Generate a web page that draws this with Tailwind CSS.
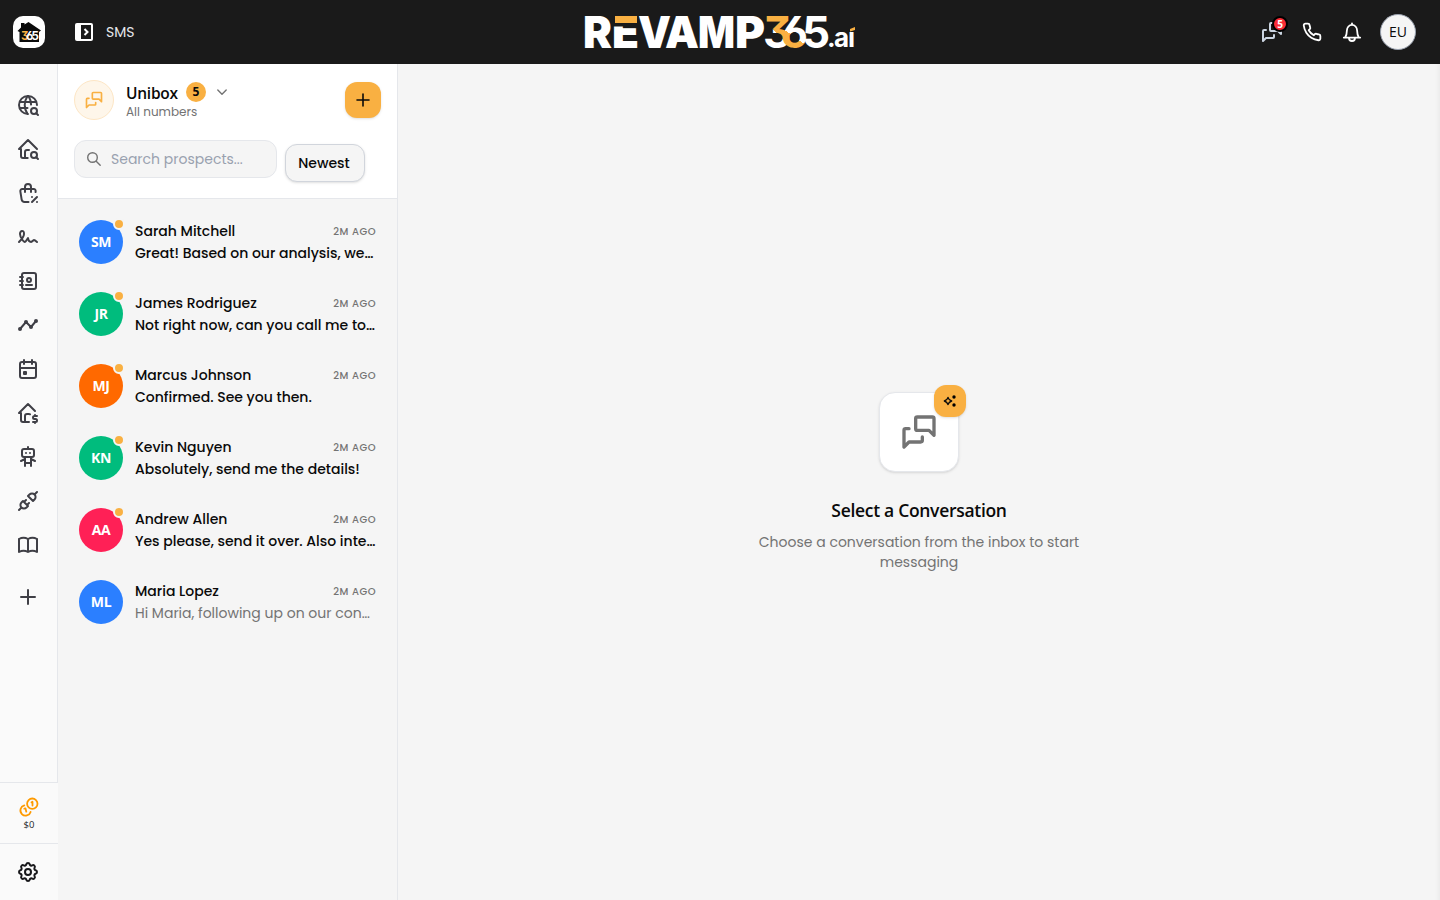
<!DOCTYPE html>
<html lang="en">
<head>
<meta charset="utf-8">
<title>SMS</title>
<script src="https://cdn.jsdelivr.net/npm/@tailwindcss/browser@4"></script>
</head>
<body class="h-screen w-screen overflow-hidden flex flex-col bg-[#f5f5f5] font-['Poppins','Inter',sans-serif] text-[#0a0a0a]">
<svg class="hidden">
  <symbol id="messages" viewBox="0 0 24 24"><path d="M21 14l-3-3h-7a1 1 0 0 1-1-1v-6a1 1 0 0 1 1-1h9a1 1 0 0 1 1 1v10M14 15v2a1 1 0 0 1-1 1h-7l-3 3v-10a1 1 0 0 1 1-1h2"/></symbol>
</svg>

<header class="h-16 shrink-0 bg-[#1a1a1a] flex items-center justify-between text-white">
  <div class="flex items-center pl-[13px] w-[572px]">
    <div class="size-8 rounded-[10px] bg-white">
      <svg class="size-8" viewBox="0 0 32 32">
        <path d="M4.500 15L8 11.500V7h3.500v1.500L15.500 6L28 14.500L26 16V26H6.500V16z" fill="#0a0a0a"/>
        <text class="[font-feature-settings:'cv03','cv09']" x="8 13.300 18.600" y="24.200" font-family="Inter" font-weight="700" font-size="11.500" fill="#fff"><tspan fill="#f9b042">3</tspan>65</text>
      </svg>
    </div>
    <svg class="ml-[30px] size-[18px]" viewBox="0 0 18 18"><rect width="18" height="18" rx="2" fill="#fff"/><path d="M6 2h10v14H6z" fill="#1a1a1a"/><path d="M9.500 6l3 3l-3 3" fill="none" stroke="#fff" stroke-width="2"/></svg>
    <span class="ml-[13px] text-sm text-gray-200">SMS</span>
  </div>
  <svg class="w-[280px] h-16" viewBox="580 0 280 64" font-family="Inter" font-weight="900">
    <defs>
      <linearGradient id="three" gradientUnits="userSpaceOnUse" x1="785" y1="25" x2="768" y2="42"><stop offset=".5" stop-color="#f9b042"/><stop offset=".5" stop-color="#fff"/></linearGradient>
      <linearGradient id="six" gradientUnits="userSpaceOnUse" x1="798" y1="29" x2="788" y2="43"><stop offset=".5" stop-color="#fff"/><stop offset=".5" stop-color="#f9b042"/></linearGradient>
    </defs>
    <g font-size="44" fill="#fff">
      <text x="583" y="47.500" textLength="29" lengthAdjust="spacingAndGlyphs">R</text>
      <text x="612" y="47.500" textLength="27" lengthAdjust="spacingAndGlyphs">E</text>
      <text x="638" y="47.500" textLength="33" lengthAdjust="spacingAndGlyphs">V</text>
      <text x="665" y="47.500" textLength="34" lengthAdjust="spacingAndGlyphs">A</text>
      <text x="698" y="47.500" textLength="37" lengthAdjust="spacingAndGlyphs">M</text>
      <text x="735" y="47.500" textLength="30" lengthAdjust="spacingAndGlyphs">P</text>
      <text class="[font-feature-settings:'cv03','cv09']" x="763 781 802" y="47.500" font-weight="700"><tspan fill="url(#three)">3</tspan><tspan fill="url(#six)">6</tspan>5</text>
    </g>
    <path d="M612 14h26.500v12.500H612z" fill="#1a1a1a"/><path d="M615 16h22v7h-22z" fill="#f9b042"/>
    <text x="827 834 848" y="46.500" font-size="26" font-weight="700" fill="#fff">.aı</text>
    <path d="M850 29l5-2v3l-5 1.500z" fill="#f9b042"/>
  </svg>
  <div class="w-[572px] pr-6 flex items-center justify-end">
    <div class="relative size-6 text-[#cbd5e1]">
      <svg class="size-6 fill-none stroke-current stroke-2 [stroke-linecap:round] [stroke-linejoin:round]"><use href="#messages"/></svg>
      <span class="absolute left-3 -top-1 size-4 rounded-full bg-[#fb2c36] border-2 border-black box-border text-white text-[10px] font-bold font-['Open_Sans'] flex items-center justify-center">5</span>
    </div>
    <svg class="ml-[18px] size-5 fill-none stroke-white stroke-[2.2] [stroke-linecap:round] [stroke-linejoin:round]" viewBox="0 0 24 24"><path d="M22 16.920v3a2 2 0 0 1-2.180 2 19.790 19.790 0 0 1-8.630-3.070 19.500 19.500 0 0 1-6-6 19.790 19.790 0 0 1-3.070-8.670A2 2 0 0 1 4.110 2h3a2 2 0 0 1 2 1.720 12.840 12.840 0 0 0 .7 2.810 2 2 0 0 1-.45 2.110L8.090 9.910a16 16 0 0 0 6 6l1.270-1.270a2 2 0 0 1 2.110-.45 12.840 12.840 0 0 0 2.810.7A2 2 0 0 1 22 16.920z"/></svg>
    <svg class="ml-[20px] size-5 fill-none stroke-white stroke-[1.8] [stroke-linecap:round] [stroke-linejoin:round]" viewBox="0 0 20 20"><path d="M10 1.300v1M1.800 15.600h16.400M3.200 15.400c1.400-1.800 1.600-3.200 1.700-6.800a5.100 5.800 0 0 1 10.200 0c.1 3.600.3 5 1.700 6.800M7 16a3 3 0 0 0 6 0"/></svg>
    <div class="ml-[18px] size-9 rounded-full bg-[#f5f5f5] border border-gray-400 text-[#0a0a0a] text-sm font-['Open_Sans'] flex items-center justify-center">EU</div>
  </div>
</header>

<div class="flex-1 min-h-0 flex">
  <aside class="w-[58px] shrink-0 bg-[#fafafa] flex flex-col text-[#3f3f46]">
    <nav class="flex-1 border-r border-gray-200 pr-px pt-[29px] flex flex-col items-center gap-5 [&>svg]:size-6 [&>svg]:shrink-0 [&>svg]:fill-none [&>svg]:stroke-current [&>svg]:stroke-2 [&>svg]:[stroke-linecap:round] [&>svg]:[stroke-linejoin:round]">
      <svg viewBox="0 0 24 24"><path d="M21 12a9 9 0 1 0-9 9M3.600 9h16.800M3.600 15h7.900M11.500 3a17 17 0 0 0 0 18M12.500 3a16.984 16.984 0 0 1 2.574 8.620M20.200 20.200l1.800 1.800"/><circle cx="18" cy="18" r="3"/></svg>
      <svg viewBox="0 0 24 24"><path d="M21 12l-9-9l-9 9h2v7a2 2 0 0 0 2 2h4.700M9 21v-6a2 2 0 0 1 2-2h2M20.200 20.200l1.800 1.800"/><circle cx="18" cy="18" r="3"/></svg>
      <svg viewBox="0 0 24 24"><path d="M12.500 21h-3.926a3 3 0 0 1-2.965-2.544l-1.255-8.152a2 2 0 0 1 1.977-2.304h11.339a2 2 0 0 1 1.977 2.304l-.117.761M9 11v-5a3 3 0 0 1 6 0v5M16 21l5-5M21 21v.01M16 16v.01"/></svg>
      <svg viewBox="0 0 24 24"><path d="M3 17c3.333-3.333 5-6 5-8c0-3-1-3-2-3s-2.032 1.085-2 3c.034 2.048 1.658 4.877 2.500 6c1.500 2 2.500 2.500 3.500 1l2-3c.333 2.667 1.333 4 3 4c.53 0 2.639-2 3-2c.517 0 1.517.667 3 2"/></svg>
      <svg viewBox="0 0 24 24"><path d="M20 6v12a2 2 0 0 1-2 2h-10a2 2 0 0 1-2-2v-12a2 2 0 0 1 2-2h10a2 2 0 0 1 2 2zM10 16h6M4 8h3M4 12h3M4 16h3"/><circle cx="13" cy="11" r="2"/></svg>
      <svg viewBox="0 0 24 24"><path d="M4 16l6-7l5 5l5-6"/><circle cx="15" cy="14" r="1"/><circle cx="10" cy="9" r="1"/><circle cx="4" cy="16" r="1"/><circle cx="20" cy="8" r="1"/></svg>
      <svg viewBox="0 0 24 24"><rect x="4" y="5" width="16" height="16" rx="2"/><path d="M16 3v4M8 3v4M4 11h16M8 15h2v2h-2z"/></svg>
      <svg viewBox="0 0 24 24"><path d="M19 10l-7-7l-9 9h2v7a2 2 0 0 0 2 2h6M9 21v-6a2 2 0 0 1 2-2h2c.387 0 .748.11 1.054.3M21 15h-2.500a1.500 1.500 0 0 0 0 3h1a1.500 1.500 0 0 1 0 3h-2.500M19 21v1m0-8v1"/></svg>
      <svg viewBox="0 0 24 24"><rect x="6" y="4" width="12" height="8" rx="2"/><path d="M12 2v2M9 12v9M15 12v9M5 16l4-2M15 14l4 2M9 18h6M10 8v.01M14 8v.01"/></svg>
      <svg viewBox="0 0 24 24"><path d="M7 12l5 5l-1.500 1.500a3.536 3.536 0 1 1-5-5l1.500-1.500zM17 12l-5-5l1.500-1.500a3.536 3.536 0 1 1 5 5l-1.500 1.500zM3 21l2.500-2.500M18.500 5.500l2.500-2.500M10 11l-2 2M13 14l-2 2"/></svg>
      <svg viewBox="0 0 24 24"><path d="M3 19a9 9 0 0 1 9 0a9 9 0 0 1 9 0M3 6a9 9 0 0 1 9 0a9 9 0 0 1 9 0M3 6v13M12 6v13M21 6v13"/></svg>
      <svg class="mt-2" viewBox="0 0 24 24"><path d="M12 5v14M5 12h14"/></svg>
    </nav>
    <div class="h-[61px] border-t border-gray-200 pt-3 flex flex-col items-center">
      <svg class="size-6 fill-none stroke-[#fe9a00] stroke-[1.8] [stroke-linecap:round] [stroke-linejoin:round]" viewBox="0 0 24 24"><circle cx="15.300" cy="8.700" r="5.200"/><path d="M14.500 7.300l1-.5v3.700M7.300 10.400a5.200 5.200 0 1 0 6.300 6.500M7.300 13.700l1.200-.3l.8 3.300"/></svg>
      <span class="text-[9.5px] leading-3 font-['Open_Sans'] text-[#27272a]">$0</span>
    </div>
    <div class="h-[57px] border-t border-gray-200 pr-0.5 flex items-center justify-center">
      <svg class="size-6 fill-none stroke-[#18181b] stroke-2 [stroke-linecap:round] [stroke-linejoin:round]" viewBox="0 0 24 24"><path d="M10.325 4.317c.426-1.756 2.924-1.756 3.350 0a1.724 1.724 0 0 0 2.573 1.066c1.543-.94 3.310.826 2.370 2.370a1.724 1.724 0 0 0 1.065 2.572c1.756.426 1.756 2.924 0 3.350a1.724 1.724 0 0 0-1.066 2.573c.94 1.543-.826 3.310-2.370 2.370a1.724 1.724 0 0 0-2.572 1.065c-.426 1.756-2.924 1.756-3.350 0a1.724 1.724 0 0 0-2.573-1.066c-1.543.94-3.310-.826-2.370-2.370a1.724 1.724 0 0 0-1.065-2.572c-1.756-.426-1.756-2.924 0-3.350a1.724 1.724 0 0 0 1.066-2.573c-.94-1.543.826-3.310 2.370-2.370c1 .608 2.296.07 2.572-1.065z"/><circle cx="12" cy="12" r="3"/></svg>
    </div>
  </aside>

  <section class="w-[340px] shrink-0 border-r border-gray-200 flex flex-col">
    <div class="h-[135px] bg-white border-b border-gray-200 px-4 pt-4">
      <div class="flex items-center h-10">
        <div class="size-10 rounded-full bg-[#fef6ea] border border-[#fde6c5] flex items-center justify-center"><svg class="size-5 fill-none stroke-[#f9b042] stroke-2 [stroke-linecap:round] [stroke-linejoin:round]"><use href="#messages"/></svg></div>
        <div class="ml-3 flex-1">
          <div class="flex items-center h-5 mt-px"><span class="w-[52px] pt-0.5 text-[15.5px] leading-5 tracking-[-0.25px] font-semibold font-['Open_Sans'] whitespace-nowrap">Unibox</span><span class="ml-2 size-5 rounded-full bg-[#f9b042] text-xs font-bold font-['Open_Sans'] flex items-center justify-center">5</span><svg class="ml-2 size-4 fill-none stroke-[#737373] stroke-[1.4] [stroke-linecap:round] [stroke-linejoin:round]" viewBox="0 0 16 16"><path d="M3.800 6l4.200 4.200L12.200 6"/></svg></div>
          <div class="text-xs leading-4 mt-0.5 text-[#737373]">All numbers</div>
        </div>
        <button class="size-9 rounded-xl bg-[#f9b042] shadow-sm flex items-center justify-center"><svg class="size-5 fill-none stroke-[#0a0a0a] stroke-[1.6] [stroke-linecap:round]" viewBox="0 0 20 20"><path d="M10 4v12M4 10h12"/></svg></button>
      </div>
      <div class="flex mt-5 gap-2">
        <div class="w-[203px] h-[38px] rounded-xl bg-[#f5f5f5] border border-gray-200 flex items-center pl-[11px]"><svg class="size-4 fill-none stroke-[#737373] stroke-[1.4] [stroke-linecap:round]" viewBox="0 0 16 16"><circle cx="6.500" cy="6.500" r="4.800"/><path d="M10.200 10.200l4 4"/></svg><span class="ml-[9px] text-sm text-gray-400">Search prospects...</span></div>
        <button class="mt-1 w-20 h-[38px] pr-0.5 rounded-xl bg-[#f5f5f5] border border-gray-300 shadow-sm text-sm font-medium">Newest</button>
      </div>
    </div>
    <div class="pt-[7px] px-[21px]">
      <div class="h-[72px] flex items-center gap-3"><div class="relative size-11 shrink-0 rounded-full bg-[#2b7fff] text-white text-sm font-bold font-['Open_Sans'] tracking-[-0.4px] flex items-center justify-center">SM<i class="absolute -top-0.5 -right-0.5 size-3 rounded-full bg-[#f9b042] border-2 border-[#f5f5f5]"></i></div><div class="flex-1 min-w-0"><div class="flex items-center justify-between h-[22px]"><b class="text-sm font-medium">Sarah Mitchell</b><span class="text-[10px] font-medium text-[#737373] tracking-[0.5px]">2M AGO</span></div><p class="text-sm leading-[22px] font-medium whitespace-nowrap">Great! Based on our analysis, we…</p></div></div>
      <div class="h-[72px] flex items-center gap-3"><div class="relative size-11 shrink-0 rounded-full bg-[#00bc7d] text-white text-sm font-bold font-['Open_Sans'] tracking-[-0.4px] flex items-center justify-center">JR<i class="absolute -top-0.5 -right-0.5 size-3 rounded-full bg-[#f9b042] border-2 border-[#f5f5f5]"></i></div><div class="flex-1 min-w-0"><div class="flex items-center justify-between h-[22px]"><b class="text-sm font-medium">James Rodriguez</b><span class="text-[10px] font-medium text-[#737373] tracking-[0.5px]">2M AGO</span></div><p class="text-sm leading-[22px] font-medium whitespace-nowrap">Not right now, can you call me to…</p></div></div>
      <div class="h-[72px] flex items-center gap-3"><div class="relative size-11 shrink-0 rounded-full bg-[#ff6900] text-white text-sm font-bold font-['Open_Sans'] tracking-[-0.4px] flex items-center justify-center">MJ<i class="absolute -top-0.5 -right-0.5 size-3 rounded-full bg-[#f9b042] border-2 border-[#f5f5f5]"></i></div><div class="flex-1 min-w-0"><div class="flex items-center justify-between h-[22px]"><b class="text-sm font-medium">Marcus Johnson</b><span class="text-[10px] font-medium text-[#737373] tracking-[0.5px]">2M AGO</span></div><p class="text-sm leading-[22px] font-medium whitespace-nowrap">Confirmed. See you then.</p></div></div>
      <div class="h-[72px] flex items-center gap-3"><div class="relative size-11 shrink-0 rounded-full bg-[#00bc7d] text-white text-sm font-bold font-['Open_Sans'] tracking-[-0.4px] flex items-center justify-center">KN<i class="absolute -top-0.5 -right-0.5 size-3 rounded-full bg-[#f9b042] border-2 border-[#f5f5f5]"></i></div><div class="flex-1 min-w-0"><div class="flex items-center justify-between h-[22px]"><b class="text-sm font-medium">Kevin Nguyen</b><span class="text-[10px] font-medium text-[#737373] tracking-[0.5px]">2M AGO</span></div><p class="text-sm leading-[22px] font-medium whitespace-nowrap">Absolutely, send me the details!</p></div></div>
      <div class="h-[72px] flex items-center gap-3"><div class="relative size-11 shrink-0 rounded-full bg-[#ff2056] text-white text-sm font-bold font-['Open_Sans'] tracking-[-0.4px] flex items-center justify-center">AA<i class="absolute -top-0.5 -right-0.5 size-3 rounded-full bg-[#f9b042] border-2 border-[#f5f5f5]"></i></div><div class="flex-1 min-w-0"><div class="flex items-center justify-between h-[22px]"><b class="text-sm font-medium">Andrew Allen</b><span class="text-[10px] font-medium text-[#737373] tracking-[0.5px]">2M AGO</span></div><p class="text-sm leading-[22px] font-medium whitespace-nowrap">Yes please, send it over. Also inte…</p></div></div>
      <div class="h-[72px] flex items-center gap-3"><div class="relative size-11 shrink-0 rounded-full bg-[#2b7fff] text-white text-sm font-bold font-['Open_Sans'] tracking-[-0.4px] flex items-center justify-center">ML</div><div class="flex-1 min-w-0"><div class="flex items-center justify-between h-[22px]"><b class="text-sm font-medium">Maria Lopez</b><span class="text-[10px] font-medium text-[#737373] tracking-[0.5px]">2M AGO</span></div><p class="text-sm leading-[22px] text-[#737373] whitespace-nowrap">Hi Maria, following up on our con…</p></div></div>
    </div>
  </section>

  <main class="flex-1 flex flex-col items-center justify-center shadow-[inset_-5px_0_5px_-4px_rgba(0,0,0,0.06)]">
    <div class="relative size-20 rounded-2xl bg-white border border-gray-200 shadow-sm flex items-center justify-center">
      <svg class="size-10 fill-none stroke-[#737373] stroke-2 [stroke-linecap:round] [stroke-linejoin:round]"><use href="#messages"/></svg>
      <div class="absolute -top-2 -right-2 size-8 rounded-xl bg-[#f9b042] shadow-sm flex items-center justify-center"><svg class="size-4" viewBox="0 0 16 16"><path d="M6 4.300c.6 2.300 1.400 3.100 3.700 3.700c-2.300.6-3.100 1.400-3.700 3.700c-.6-2.300-1.400-3.100-3.700-3.700c2.300-.6 3.100-1.400 3.700-3.700z" fill="none" stroke="#0a0a0a" stroke-width="1.300" stroke-linejoin="round"/><circle cx="12" cy="4" r="1.700"/><circle cx="12" cy="12" r="1.700"/></svg></div>
    </div>
    <h2 class="mt-6 text-[17.5px] leading-7 font-semibold tracking-[-0.3px] font-['Open_Sans']">Select a Conversation</h2>
    <p class="mt-2 w-[340px] text-center text-sm leading-5 text-[#737373]">Choose a conversation from the inbox to start<br>messaging</p>
  </main>
</div>
</body>
</html>
